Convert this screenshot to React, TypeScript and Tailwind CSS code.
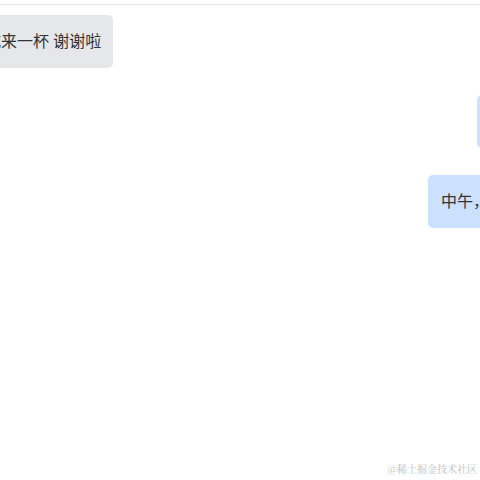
import React from "react";

export default function App() {
  return (
    <div
      className="relative w-[480px] h-[480px] overflow-hidden bg-white text-[#333333]"
      style={{ fontFamily: '"Noto Sans", "Noto Sans CJK SC", sans-serif' }}
    >
      <div className="h-[4px]" />
      <div className="h-px bg-[#e8e8e8]" />
      <div className="flex flex-col gap-[27px] pt-[10px]">
        <div className="flex">
          <div className="-ml-[43px] rounded-[5px] bg-[#e5e7eb] px-[12px] py-[14px] text-[16px] leading-[25px] whitespace-nowrap">
            美式来一杯 谢谢啦
          </div>
        </div>
        <div className="flex justify-start">
          <div className="ml-[477px] w-[120px] shrink-0 rounded-[5px] bg-[#cce0ff] px-[12px] py-[14px] text-[16px] leading-[25px] whitespace-nowrap">
            &nbsp;
          </div>
        </div>
        <div className="flex justify-start">
          <div className="ml-[428px] shrink-0 rounded-[5px] bg-[#cce0ff] px-[13px] py-[14px] text-[16px] leading-[25px] whitespace-nowrap">
            中午，一起吃饭吧
          </div>
        </div>
      </div>
      <div
        className="absolute right-[3px] bottom-[5px] text-[10px] leading-[12px] text-[#bdbdbd]"
        style={{ fontFamily: '"Noto Serif CJK SC", "Noto Sans CJK SC", serif' }}
      >
        @稀土掘金技术社区
      </div>
    </div>
  );
}
